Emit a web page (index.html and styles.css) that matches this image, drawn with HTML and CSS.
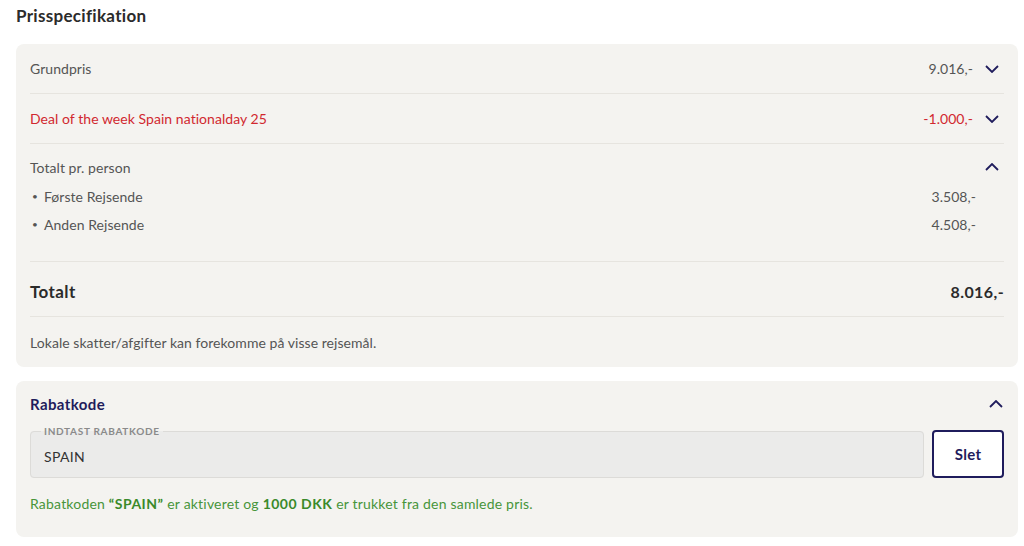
FILE: index.html
```html
<!DOCTYPE html>
<html lang="da">
<head>
    <meta charset="UTF-8">
    <meta name="viewport" content="width=device-width, initial-scale=1.0">
    <link rel="stylesheet" href="styles.css">
</head>
<body>
    <h2 class="title">Prisspecifikation</h2>

    <section class="card price-card">
        <div class="row">
            <span class="label">Grundpris</span>
            <span class="amount">9.016,-</span>
            <svg class="chevron" viewBox="0 0 14 8"><path d="M1 1l6 6 6-6"/></svg>
        </div>
        <div class="row deal">
            <span class="label">Deal of the week Spain nationalday 25</span>
            <span class="amount">-1.000,-</span>
            <svg class="chevron" viewBox="0 0 14 8"><path d="M1 1l6 6 6-6"/></svg>
        </div>
        <div class="persons">
            <div class="persons-head">
                <span class="label">Totalt pr. person</span>
                <svg class="chevron" viewBox="0 0 14 8"><path d="M1 7l6-6 6 6"/></svg>
            </div>
            <ul class="person-list">
                <li><span class="bullet">&bull;</span><span class="label">Første Rejsende</span><span class="amount">3.508,-</span></li>
                <li><span class="bullet">&bull;</span><span class="label">Anden Rejsende</span><span class="amount">4.508,-</span></li>
            </ul>
        </div>
        <div class="row total">
            <span class="label">Totalt</span>
            <span class="amount">8.016,-</span>
        </div>
        <div class="row note">
            <span class="label">Lokale skatter/afgifter kan forekomme på visse rejsemål.</span>
        </div>
    </section>

    <section class="card code-card">
        <div class="code-head">
            <span>Rabatkode</span>
            <svg class="chevron" viewBox="0 0 14 8"><path d="M1 7l6-6 6 6"/></svg>
        </div>
        <div class="code-form">
            <fieldset class="code-field">
                <legend>INDTAST RABATKODE</legend>
                <span class="code-value">SPAIN</span>
            </fieldset>
            <button class="delete-btn">Slet</button>
        </div>
        <p class="success">Rabatkoden <b>&ldquo;SPAIN&rdquo;</b> er aktiveret og <b>1000 DKK</b> er trukket fra den samlede pris.</p>
    </section>
</body>
</html>
```

FILE: styles.css
```css
body {
    font-family: 'Lato', 'Open Sans', sans-serif;
    margin: 0;
    padding: 0 6px 0 16px;
    background-color: #FFFFFF;
    color: #555;
    font-size: 14px;
    letter-spacing: 0.05px;
}
.title {
    font-size: 17px;
    font-weight: 700;
    letter-spacing: 0.3px;
    color: #2b2b2b;
    margin: 0;
    height: 44px;
    line-height: 32px;
}
.card {
    background-color: #f4f3f0;
    border-radius: 8px;
    padding: 0 14px;
}
.row {
    display: flex;
    align-items: center;
    height: 49px;
    border-bottom: 1px solid #e6e4df;
}
.row .label {
    flex-grow: 1;
}
.amount {
    color: #555;
}
.chevron {
    width: 14px;
    height: 8px;
    margin-left: 12px;
    margin-right: 5px;
    fill: none;
    stroke: #1f1c5c;
    stroke-width: 1.8;
}
.deal .label,
.deal .amount {
    color: #d1282f;
}
.persons {
    padding: 13px 0 23px;
    border-bottom: 1px solid #e6e4df;
}
.persons-head {
    display: flex;
    align-items: center;
    justify-content: space-between;
    height: 20px;
}
.person-list {
    list-style: none;
    margin: 5px 0 0;
    padding: 0;
}
.person-list li {
    display: flex;
    align-items: center;
    height: 28px;
}
.bullet {
    width: 12px;
    padding-left: 2px;
    font-size: 10px;
}
.person-list .label {
    flex-grow: 1;
}
.person-list .amount {
    margin-right: 28px;
}
.total {
    height: 55px;
    padding-top: 4px;
    box-sizing: border-box;
}
.total .label,
.total .amount {
    font-size: 16px;
    font-weight: 700;
    letter-spacing: 0.4px;
    color: #2b2b2b;
}
.total .label {
    font-size: 17px;
}
.note {
    border-bottom: none;
    height: 50px;
}
.code-card {
    margin-top: 14px;
    padding-top: 13px;
    padding-bottom: 23px;
}
.code-head {
    display: flex;
    align-items: center;
    justify-content: space-between;
    height: 20px;
    font-size: 15px;
    font-weight: 700;
    letter-spacing: 0.4px;
    color: #1f1c5c;
}
.code-head .chevron {
    margin-right: 1px;
}
.code-form {
    display: flex;
    gap: 8px;
    margin-top: 11px;
}
.code-field {
    flex-grow: 1;
    margin: 0;
    padding: 0 13px;
    height: 53px;
    box-sizing: border-box;
    border: 1px solid #dcdbd8;
    border-radius: 4px;
    background-color: #ebebea;
    display: flex;
    align-items: center;
}
.code-field legend {
    font-size: 10px;
    font-weight: 700;
    letter-spacing: 0.7px;
    color: #8a8a8a;
    padding: 0 3px;
    margin-left: -3px;
}
.code-value {
    color: #333;
    letter-spacing: 0.3px;
    margin-top: -2px;
}
.delete-btn {
    width: 72px;
    height: 48px;
    margin-top: 5px;
    border: 2px solid #1f1c5c;
    border-radius: 4px;
    background-color: #fff;
    color: #1f1c5c;
    font-family: inherit;
    font-size: 15px;
    font-weight: 700;
    letter-spacing: 0.3px;
}
.success {
    margin: 16px 0 0;
    line-height: 20px;
    color: #47953a;
    letter-spacing: 0.2px;
}
.success b {
    color: #3a8a2a;
    letter-spacing: 0.5px;
}
```
